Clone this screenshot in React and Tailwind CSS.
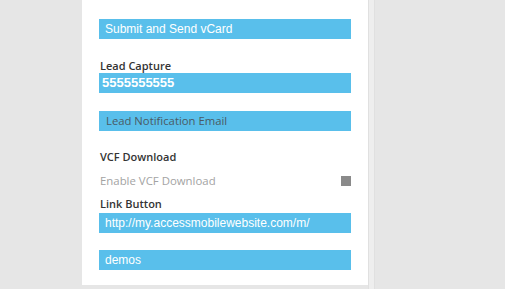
export default function App() {
  const bar = "w-[252px] h-[20px] bg-[#59bfeb] flex items-center";
  const label = "h-[14px] leading-[14px] text-[11px] font-semibold text-[#333]";
  return (
    <div className="w-[505px] h-[289px] bg-[#e6e6e6] flex overflow-hidden" style={{ fontFamily: "'Open Sans', Lato, sans-serif" }}>
      <div className="ml-[82px] w-[286px] h-[285px] bg-white pl-[17px] pt-[19px] flex flex-col">
        <div className={bar + " pl-[6px]"}>
          <span className="text-white text-[12px]" style={{ fontFamily: "'Liberation Sans', Arial, sans-serif" }}>Submit and Send vCard</span>
        </div>
        <div className={label + " mt-[20px] pl-[1px]"}>Lead Capture</div>
        <div className={bar + " pl-[3px]"}>
          <span className="text-white text-[13px] font-bold" style={{ fontFamily: "'Liberation Sans', Arial, sans-serif" }}>5555555555</span>
        </div>
        <div className={bar + " mt-[18px] pl-[7px]"}>
          <span className="text-[#4a5a63] text-[11.3px]">Lead Notification Email</span>
        </div>
        <div className={label + " mt-[19px] pl-[1px]"}>VCF Download</div>
        <div className="mt-[10px] h-[14px] w-[252px] flex items-center justify-between pl-[1px]">
          <span className="text-[11.4px] text-[#a3a3a3]">Enable VCF Download</span>
          <span className="w-[10px] h-[10px] bg-[#8a8a8a]"></span>
        </div>
        <div className={label + " mt-[9px] pl-[1px]"}>Link Button</div>
        <div className={bar + " mt-[2px] pl-[6px]"}>
          <span className="text-white text-[12px]" style={{ fontFamily: "'Liberation Sans', Arial, sans-serif" }}>http://my.accessmobilewebsite.com/m/</span>
        </div>
        <div className={bar + " mt-[17px] pl-[6px]"}>
          <span className="text-white text-[12px]" style={{ fontFamily: "'Liberation Sans', Arial, sans-serif" }}>demos</span>
        </div>
      </div>
      <div className="w-[7px] h-full bg-[#eeeeee] border-l border-r border-[#e0e0e0]"></div>
    </div>
  );
}
